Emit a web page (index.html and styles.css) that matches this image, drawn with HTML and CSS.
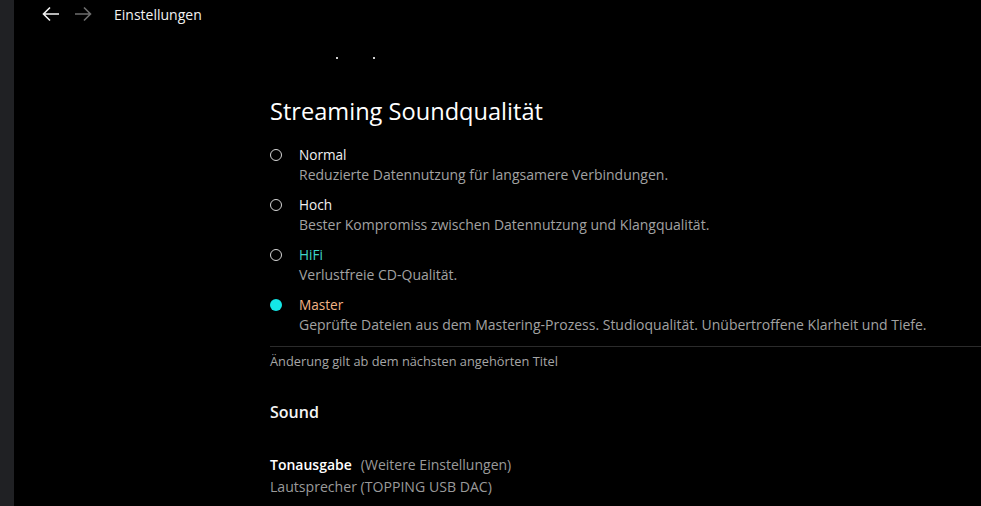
FILE: index.html
```html
<!DOCTYPE html>
<html lang="de">
<head>
    <meta charset="UTF-8">
    <meta name="viewport" content="width=device-width, initial-scale=1.0">
    <title>Einstellungen</title>
    <link rel="stylesheet" href="styles.css">
</head>
<body>

    <aside class="sidebar"></aside>

    <main class="page">
        <header class="topbar">
            <button class="nav-btn">
                <svg width="18" height="16" viewBox="0 0 18 16"><path d="M17 8H2M8 1.5L1.5 8 8 14.5" fill="none" stroke="currentColor" stroke-width="1.6"/></svg>
            </button>
            <button class="nav-btn disabled">
                <svg width="18" height="16" viewBox="0 0 18 16"><path d="M1 8h15M10 1.5L16.5 8 10 14.5" fill="none" stroke="currentColor" stroke-width="1.6"/></svg>
            </button>
            <span class="page-title">Einstellungen</span>
        </header>

        <div class="settings">
            <div class="clipped"><span class="dot"></span><span class="dot"></span></div>

            <h2 class="section-title">Streaming Soundqualität</h2>

            <div class="options">
                <label class="option">
                    <span class="radio"></span>
                    <span class="option-text">
                        <span class="option-name">Normal</span>
                        <span class="option-desc">Reduzierte Datennutzung für langsamere Verbindungen.</span>
                    </span>
                </label>
                <label class="option">
                    <span class="radio"></span>
                    <span class="option-text">
                        <span class="option-name">Hoch</span>
                        <span class="option-desc">Bester Kompromiss zwischen Datennutzung und Klangqualität.</span>
                    </span>
                </label>
                <label class="option">
                    <span class="radio"></span>
                    <span class="option-text">
                        <span class="option-name hifi">HiFi</span>
                        <span class="option-desc">Verlustfreie CD-Qualität.</span>
                    </span>
                </label>
                <label class="option">
                    <span class="radio checked"></span>
                    <span class="option-text">
                        <span class="option-name master">Master</span>
                        <span class="option-desc">Geprüfte Dateien aus dem Mastering-Prozess. Studioqualität. Unübertroffene Klarheit und Tiefe.</span>
                    </span>
                </label>
            </div>

            <div class="divider"></div>
            <p class="note">Änderung gilt ab dem nächsten angehörten Titel</p>

            <h3 class="group-title">Sound</h3>

            <div class="setting">
                <div class="setting-head">
                    <span class="setting-name">Tonausgabe</span>
                    <span class="setting-extra">(Weitere Einstellungen)</span>
                </div>
                <div class="setting-value">Lautsprecher (TOPPING USB DAC)</div>
            </div>
        </div>
    </main>

</body>
</html>
```

FILE: styles.css
```css
body {
    font-family: "Open Sans", Arial, sans-serif;
    display: flex;
    height: 100vh;
    margin: 0;
    background-color: #000;
    color: #fff;
    overflow: hidden;
}
.sidebar {
    width: 14px;
    flex-shrink: 0;
    background-color: #202124;
}
.page {
    flex: 1;
    display: flex;
    flex-direction: column;
}
.topbar {
    height: 28px;
    display: flex;
    align-items: center;
    padding-left: 28px;
}
.nav-btn {
    background: none;
    border: none;
    padding: 0;
    margin-right: 14px;
    color: #f2f2f2;
    display: flex;
    cursor: pointer;
}
.nav-btn.disabled {
    color: #6e6e6e;
}
.page-title {
    margin-left: 8px;
    font-size: 14px;
    color: #f2f2f2;
}
.settings {
    padding-left: 256px;
}
.clipped {
    display: flex;
    gap: 35px;
    margin-top: 29px;
    padding-left: 66px;
    height: 2px;
}
.dot {
    width: 2px;
    height: 2px;
    background-color: #cfcfcf;
}
.section-title {
    margin: 36px 0 0;
    font-size: 23.6px;
    font-weight: 400;
    line-height: 32px;
    color: #fff;
}
.options {
    display: flex;
    flex-direction: column;
    gap: 11px;
    margin-top: 18px;
}
.option {
    display: flex;
    align-items: flex-start;
    cursor: pointer;
}
.radio {
    width: 10px;
    height: 10px;
    margin-top: 4px;
    margin-right: 17px;
    border: 1px solid #d6d6d6;
    border-radius: 50%;
    flex-shrink: 0;
}
.radio.checked {
    width: 12px;
    height: 12px;
    border: none;
    background-color: #14e6e6;
}
.option-text {
    display: flex;
    flex-direction: column;
}
.option-name {
    font-size: 13.6px;
    line-height: 20px;
    color: #f0f0f0;
}
.option-name.hifi {
    color: #3fd6c8;
}
.option-name.master {
    color: #f2b386;
}
.option-desc {
    font-size: 14px;
    line-height: 19px;
    color: #a2a2a2;
}
.divider {
    height: 1px;
    margin-top: 12px;
    background-color: #2b2b2b;
}
.note {
    margin: 5px 0 0;
    font-size: 12.8px;
    line-height: 18px;
    color: #a6a6a6;
}
.group-title {
    margin: 30px 0 0;
    font-size: 16px;
    font-weight: 600;
    line-height: 24px;
    color: #f4f4f4;
}
.setting {
    margin-top: 31px;
}
.setting-head {
    display: flex;
    align-items: baseline;
    gap: 9px;
    line-height: 20px;
}
.setting-name {
    font-size: 14px;
    font-weight: 600;
    color: #fff;
}
.setting-extra {
    font-size: 14px;
    color: #9a9a9a;
}
.setting-value {
    margin-top: 2px;
    font-size: 14.1px;
    line-height: 20px;
    color: #9a9a9a;
}
```
